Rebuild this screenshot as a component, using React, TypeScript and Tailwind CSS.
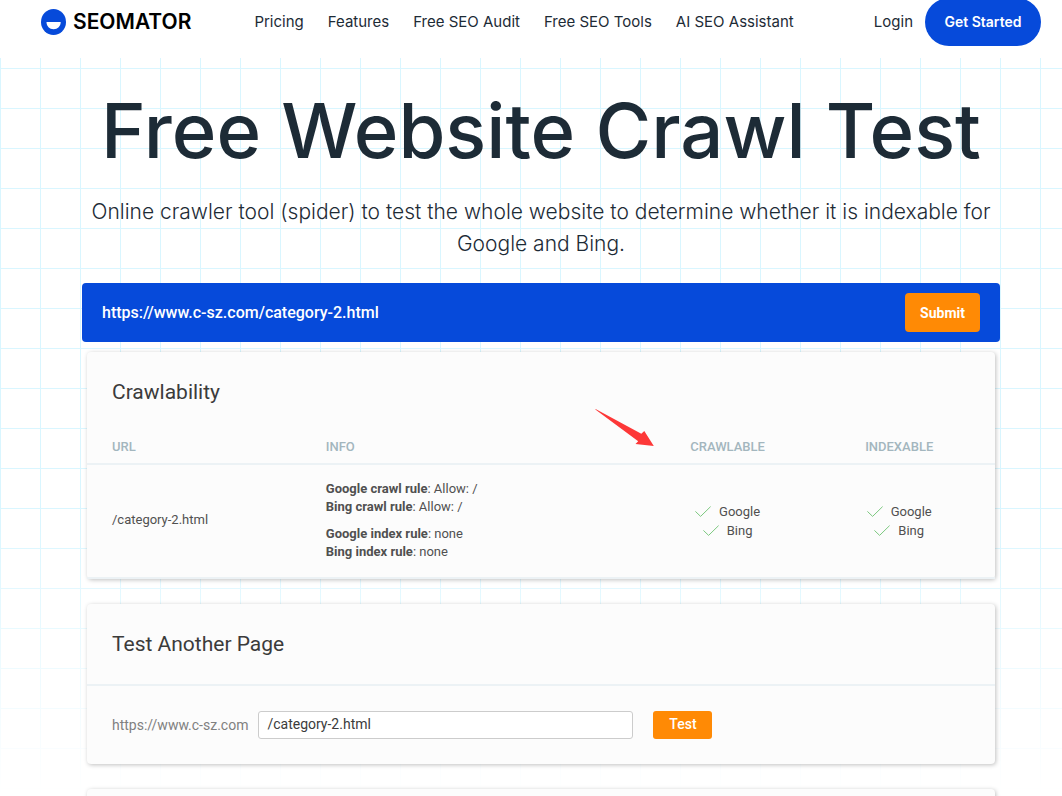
import { useState } from "react";
import type { ReactNode } from "react";

const navItems = ["Pricing", "Features", "Free SEO Audit", "Free SEO Tools", "AI SEO Assistant"];

const engines = ["Google", "Bing"];

const crawlRules = [
  { name: "Google crawl rule", value: "Allow: /" },
  { name: "Bing crawl rule", value: "Allow: /" },
];

const indexRules = [
  { name: "Google index rule", value: "none" },
  { name: "Bing index rule", value: "none" },
];

const Logo = () => (
  <a href="#" className="flex items-center gap-[7px] text-[21px] font-semibold text-black">
    <svg width="25" height="26" viewBox="0 0 25 26" aria-hidden="true">
      <ellipse cx="12.5" cy="13" rx="12.5" ry="13" fill="#064ada" />
      <path d="M5.5 13h14.2c0 4.2-3 7.2-7.1 7.2s-7.1-3-7.1-7.2z" fill="#fff" />
    </svg>
    SEOMATOR
  </a>
);

const Card = ({ children }: { children: ReactNode }) => (
  <section className="relative rounded bg-[#fcfcfc] shadow-[1px_1px_4px_rgba(0,0,0,0.25)]">
    {children}
  </section>
);

const Rules = ({ items }: { items: { name: string; value: string }[] }) => (
  <ul>
    {items.map((item) => (
      <li key={item.name}>
        <b className="font-bold">{item.name}</b>: {item.value}
      </li>
    ))}
  </ul>
);

const EngineChecks = () => (
  <ul className="flex flex-col items-center leading-[19px]">
    {engines.map((engine) => (
      <li key={engine} className="flex items-center gap-2">
        <svg width="16" height="11" viewBox="0 0 16 11" fill="none" stroke="#7cc87f" aria-hidden="true">
          <path d="M0.4 5.4l5.2 5L15.6 0.6" />
        </svg>
        {engine}
      </li>
    ))}
  </ul>
);

const RedArrow = () => (
  <svg
    className="absolute top-[57px] left-[55.9%]"
    width="59"
    height="38"
    viewBox="0 0 59 38"
    fill="#fd3838"
    aria-hidden="true"
  >
    <path d="M0 0.2L1 0.2 46.3 24.8 49.3 22 58.8 37 40.5 35 43.2 32.2Z" />
  </svg>
);

const App = () => {
  const [url, setUrl] = useState("https://www.c-sz.com/category-2.html");
  const [path, setPath] = useState("/category-2.html");

  return (
    <div className="h-screen overflow-hidden bg-white font-['Inter',sans-serif] text-[#1d2b36]">
      <header className="h-[58px] pr-[21px] pl-[41px]">
        <div className="flex h-11 items-center">
          <Logo />
          <nav className="ml-[63px] flex gap-6 text-[15px]">
            {navItems.map((item) => (
              <a key={item} href="#">
                {item}
              </a>
            ))}
          </nav>
          <div className="ml-auto flex items-center gap-3">
            <a href="#" className="text-[15px]">
              Login
            </a>
            <button
              type="button"
              className="h-12 w-[116px] rounded-full bg-[#064ada] text-sm font-semibold text-white"
            >
              Get Started
            </button>
          </div>
        </div>
      </header>

      <main className="relative pr-[62px] pl-[82px]">
        <div className="absolute inset-x-0 top-0 h-[738px] bg-[linear-gradient(to_right,#d9f6ff_1px,transparent_1px),linear-gradient(to_bottom,#d9f6ff_1px,transparent_1px)] mask-[linear-gradient(to_bottom,black_62%,transparent)] bg-size-[40px_40px] bg-position-[0_10px]" />

        <div className="relative">
          <h1 className="pt-[26px] text-center text-[76px] leading-[92px] font-medium whitespace-nowrap">
            Free Website Crawl Test
          </h1>
          <p className="mt-5 text-center text-[21px] leading-8 font-light">
            Online crawler tool (spider) to test the whole website to determine whether it is indexable for
            Google and Bing.
          </p>

          <div className="mt-[23px] font-['Roboto',sans-serif]">
            <form
              className="flex h-[59px] items-center rounded bg-[#064ada] px-5 font-medium text-white"
              onSubmit={(e) => e.preventDefault()}
            >
              <input
                type="text"
                aria-label="Website URL"
                className="min-w-0 flex-1 bg-transparent outline-none"
                value={url}
                onChange={(e) => setUrl(e.target.value)}
              />
              <button type="submit" className="h-[39px] w-[75px] rounded bg-[#ff8a05] text-sm font-bold">
                Submit
              </button>
            </form>

            <div className="mt-2.5 flex flex-col gap-[25px] px-[5px]">
              <Card>
                <h2 className="px-[25px] pt-6 text-[21px] leading-8 text-[#3b3b3b]">Crawlability</h2>
                <RedArrow />
                <table className="mt-5 w-full table-fixed text-[13px] leading-[18px] text-[#505050]">
                  <thead>
                    <tr className="h-9 border-b-2 border-[#ecf2f5] text-[#a3b6be] uppercase">
                      <th className="w-[26.3%] pt-0.5 pl-[25px] text-left font-medium">Url</th>
                      <th className="w-[35.9%] pt-0.5 text-left font-medium">Info</th>
                      <th className="w-[16.7%] pt-0.5 font-medium">Crawlable</th>
                      <th className="w-[21.1%] pt-0.5 font-medium">Indexable</th>
                    </tr>
                  </thead>
                  <tbody>
                    <tr className="h-[114px] border-b-2 border-[#ecf2f5]">
                      <td className="pb-0.5 pl-[25px]">/category-2.html</td>
                      <td className="pb-0.5">
                        <div className="flex flex-col gap-[9px]">
                          <Rules items={crawlRules} />
                          <Rules items={indexRules} />
                        </div>
                      </td>
                      <td>
                        <EngineChecks />
                      </td>
                      <td>
                        <EngineChecks />
                      </td>
                    </tr>
                  </tbody>
                </table>
              </Card>

              <Card>
                <h2 className="border-b-2 border-[#ecf2f5] px-[25px] py-6 text-[21px] leading-8 text-[#3b3b3b]">
                  Test Another Page
                </h2>
                <form
                  className="flex items-center px-[25px] py-[25px] text-sm"
                  onSubmit={(e) => e.preventDefault()}
                >
                  <label htmlFor="page-path" className="text-[#808080]">
                    https://www.c-sz.com
                  </label>
                  <input
                    id="page-path"
                    type="text"
                    className="ml-2.5 h-7 w-[375px] rounded-[3px] border border-[#cccccc] bg-white px-2 pb-0.5 text-[#3b3b3b] outline-none"
                    value={path}
                    onChange={(e) => setPath(e.target.value)}
                  />
                  <button
                    type="submit"
                    className="ml-5 h-7 w-[59px] rounded-[3px] bg-[#ff8a05] pb-0.5 font-medium text-white"
                  >
                    Test
                  </button>
                </form>
              </Card>

              <Card>
                <div className="h-20" />
              </Card>
            </div>
          </div>
        </div>
      </main>
    </div>
  );
};

export default App;
